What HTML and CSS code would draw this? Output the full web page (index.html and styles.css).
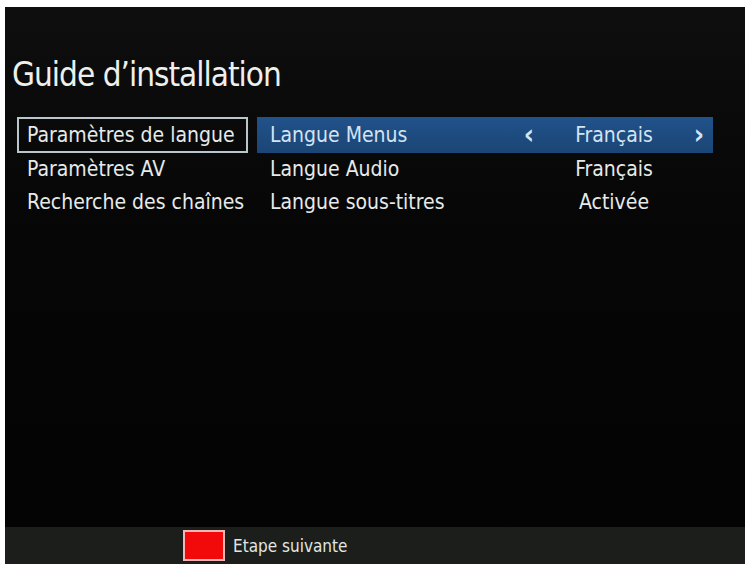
FILE: index.html
```html
<!DOCTYPE html>
<html lang="fr">
<head>
<meta charset="utf-8">
<title>Guide d'installation</title>
<link rel="stylesheet" href="styles.css">
</head>
<body>
<div class="screen">
  <h1 class="title">Guide d’installation</h1>
  <div class="content">
    <ul class="menu">
      <li class="menu-item is-focused">Paramètres de langue</li>
      <li class="menu-item">Paramètres AV</li>
      <li class="menu-item">Recherche des chaînes</li>
    </ul>
    <div class="panel">
      <div class="row is-selected">
        <span class="label">Langue Menus</span>
        <span class="arrow">‹</span>
        <span class="value">Français</span>
        <span class="arrow">›</span>
      </div>
      <div class="row">
        <span class="label">Langue Audio</span>
        <span class="arrow"></span>
        <span class="value">Français</span>
        <span class="arrow"></span>
      </div>
      <div class="row">
        <span class="label">Langue sous-titres</span>
        <span class="arrow"></span>
        <span class="value">Activée</span>
        <span class="arrow"></span>
      </div>
    </div>
  </div>
  <div class="footer">
    <span class="key-red"></span>
    <span class="footer-text">Etape suivante</span>
  </div>
</div>
</body>
</html>
```
FILE: styles.css
```css
html, body {
  margin: 0;
  padding: 0;
  background: #ffffff;
}
body {
  width: 748px;
  height: 568px;
  overflow: hidden;
  font-family: "Liberation Sans Narrow", "DejaVu Sans Condensed", "Liberation Sans", sans-serif;
  font-stretch: condensed;
}
.screen {
  margin: 7px 3px 0 5px;
  width: 740px;
  height: 557px;
  background: linear-gradient(180deg, #0e0e0e 0%, #060606 40%, #020302 100%);
  display: flex;
  flex-direction: column;
  color: #e6eaea;
}
.title {
  margin: 0;
  padding: 48px 0 0 7px;
  height: 62px;
  font-weight: normal;
  font-size: 33px;
  letter-spacing: -1px;
  line-height: 40px;
  color: #eef0ee;
}
.content {
  display: flex;
  padding-left: 12px;
  gap: 9px;
  flex: 1;
}
.menu {
  list-style: none;
  margin: 0;
  padding: 0;
  width: 231px;
}
.menu-item {
  height: 29px;
  border: 2px solid transparent;
  padding-left: 8px;
  font-size: 21px;
  line-height: 29px;
  white-space: nowrap;
}
.menu-item.is-focused {
  height: 32px;
  line-height: 32px;
  border-color: #b9c6cc;
}
.panel {
  width: 456px;
}
.row {
  display: grid;
  grid-template-columns: 1fr 12px 158px 12px;
  padding: 0 8px 0 13px;
  height: 33px;
  font-size: 21px;
  line-height: 33px;
  white-space: nowrap;
}
.row.is-selected {
  height: 36px;
  line-height: 36px;
  background: linear-gradient(180deg, #21528a 0%, #1b4576 100%);
  color: #d4e4f2;
}
.arrow {
  text-align: center;
  font-size: 28px;
  font-weight: bold;
}
.value {
  text-align: center;
}
.footer {
  height: 37px;
  background: #1b1e1a;
  display: flex;
  align-items: center;
  padding-left: 178px;
  gap: 8px;
}
.key-red {
  width: 38px;
  height: 27px;
  background: #f20a0a;
  border: 2px solid #f2b8b8;
}
.footer-text {
  font-size: 17px;
  color: #e2e6e2;
}
```
